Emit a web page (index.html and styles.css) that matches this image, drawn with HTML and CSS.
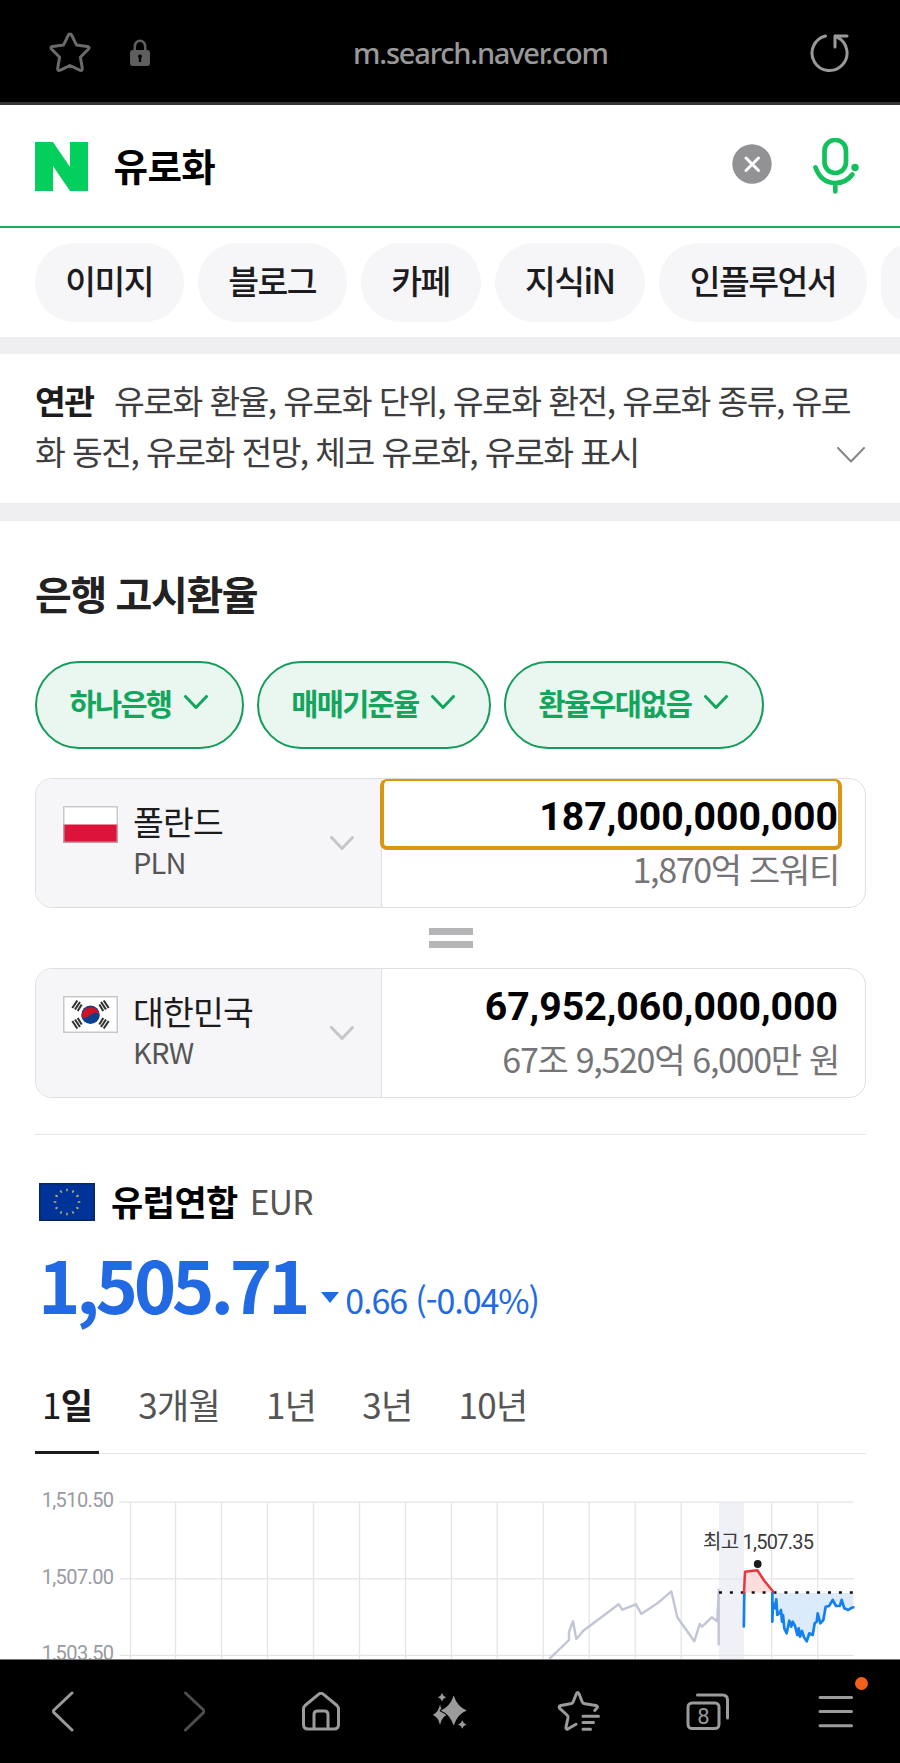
FILE: index.html
```html
<!DOCTYPE html>
<html lang="ko">
<head>
    <meta charset="UTF-8">
    <meta name="viewport" content="width=device-width, initial-scale=1.0">
    <title>유로화</title>
    <link rel="stylesheet" href="styles.css">
</head>
<body>

    <header class="address-bar">
        <svg class="icon-star" width="44" height="44" viewBox="0 0 44 44">
            <path d="M22 3q1.200 0 1.800 1.300l4.600 9.600 10.900 1.600q3 .6 1 2.800l-7.900 8 1.900 11q.2 3-2.600 1.800L22 34.500l-9.700 4.600q-2.800 1.200-2.600-1.800l1.900-11-7.900-8q-2-2.200 1-2.800l10.900-1.600 4.600-9.600q.6-1.300 1.800-1.300z"/>
        </svg>
        <svg class="icon-lock" width="20" height="28" viewBox="0 0 20 28">
            <path class="shackle" d="M4.800 12V7.500a5.200 5.800 0 0 1 10.400 0V12"/>
            <path class="lock-body" fill-rule="evenodd" d="M3 11h14q3 0 3 3v10q0 3-3 3H3q-3 0-3-3V14q0-3 3-3zM10 15.500a2 2 0 0 0-1.200 3.600V23h2.400v-3.900A2 2 0 0 0 10 15.500z"/>
        </svg>
        <span class="url">m.search.naver.com</span>
        <svg class="icon-reload" width="42" height="42" viewBox="0 0 42 42">
            <path d="M17.500 4A17.500 17.500 0 1 0 29 5.200L27 4M39 4H27v11"/>
        </svg>
    </header>

    <div class="search-bar">
        <svg class="logo" width="53" height="49" viewBox="0 0 53 49">
            <polygon points="0,0 18,0 35,25 35,0 53,0 53,49 35,49 18,24 18,49 0,49"/>
        </svg>
        <span class="query">유로화</span>
        <svg class="icon-clear" width="40" height="40" viewBox="0 0 40 40">
            <circle cx="20" cy="20" r="19.700"/>
            <path d="M14 14l12.500 12.500M26.500 14L14 26.500"/>
        </svg>
        <svg class="icon-mic" width="46" height="56" viewBox="0 0 46 56">
            <rect x="11.500" y="2" width="21.500" height="33" rx="10.700"/>
            <path d="M2.500 29.500C6 39 13 45 22.300 45c7 0 13-3 17-8.500M22.300 45v8.500"/>
            <circle cx="42" cy="29.500" r="3.700"/>
        </svg>
    </div>

    <nav class="category">
        <a>이미지</a>
        <a>블로그</a>
        <a>카페</a>
        <a>지식iN</a>
        <a>인플루언서</a>
        <a></a>
    </nav>

    <section class="related">
        <p><b>연관</b>유로화 환율, 유로화 단위, 유로화 환전, 유로화 종류, 유로<br>화 동전, 유로화 전망, 체코 유로화, 유로화 표시</p>
        <svg class="related-more" width="28" height="16" viewBox="0 0 28 16"><path d="M1 1l13 13.500L27 1"/></svg>
    </section>

    <main class="rate">
        <h2>은행 고시환율</h2>

        <div class="filters">
            <button>하나은행<svg width="24" height="15" viewBox="0 0 24 15"><path d="M1.500 1.500L12 12.500l10.500-11"/></svg></button>
            <button>매매기준율<svg width="24" height="15" viewBox="0 0 24 15"><path d="M1.500 1.500L12 12.500l10.500-11"/></svg></button>
            <button>환율우대없음<svg width="24" height="15" viewBox="0 0 24 15"><path d="M1.500 1.500L12 12.500l10.500-11"/></svg></button>
        </div>

        <div class="currency">
            <div class="nation">
                <svg class="flag" width="55" height="37" viewBox="0 0 55 37">
                    <rect width="55" height="37" fill="#fff"/>
                    <rect y="18.500" width="55" height="18.500" fill="#dc143c"/>
                    <rect class="flag-line" x=".75" y=".75" width="53.500" height="35.500"/>
                </svg>
                <div class="nation-name">
                    <span class="name">폴란드</span>
                    <span class="code">PLN</span>
                </div>
                <svg class="arrow" width="24" height="15" viewBox="0 0 24 15"><path d="M1.500 1.500L12 12.500l10.500-11"/></svg>
            </div>
            <div class="amount">
                <div class="number focus">187,000,000,000</div>
                <div class="reading">1,870억 즈워티</div>
            </div>
        </div>

        <div class="equal"></div>

        <div class="currency">
            <div class="nation">
                <svg class="flag" width="55" height="37" viewBox="0 0 55 37">
                    <rect width="55" height="37" fill="#fff"/>
                    <circle cx="27.500" cy="18.800" r="9.200" fill="#0c3f8c"/>
                    <path class="taegeuk" d="M18.500 20.500a9.200 9.200 0 0 1 18.200-2c-2-2.400-6-2.600-9.200.3s-7 4.200-9 1.700z"/>
                    <g class="trigram">
                        <path d="M9.300 12l5-7.500M12 13.500l5-7.500M14.700 15l4-6.500"/>
                        <path d="M45.700 12l-5-7.500M43 13.500L38 6M40.300 15l-4-6.500"/>
                        <path d="M9.300 25l5 7.500M12 23.500l5 7.500M14.700 22l4 6.500"/>
                        <path d="M45.700 25l-5 7.500M43 23.500L38 31M40.300 22l-4 6.500"/>
                    </g>
                    <rect class="flag-line" x=".75" y=".75" width="53.500" height="35.500"/>
                </svg>
                <div class="nation-name">
                    <span class="name">대한민국</span>
                    <span class="code">KRW</span>
                </div>
                <svg class="arrow" width="24" height="15" viewBox="0 0 24 15"><path d="M1.500 1.500L12 12.500l10.500-11"/></svg>
            </div>
            <div class="amount">
                <div class="number">67,952,060,000,000</div>
                <div class="reading">67조 9,520억 6,000만 원</div>
            </div>
        </div>

        <div class="summary">
            <div class="summary-title">
                <svg class="flag" width="56" height="38" viewBox="0 0 56 38">
                    <rect width="56" height="38" fill="#003399"/>
                    <rect x=".75" y=".75" width="54.500" height="36.500" fill="none" stroke="#0a2560" stroke-width="1.500"/>
                    <circle class="eu-stars" cx="28" cy="19" r="12" pathLength="120"/>
                </svg>
                <strong>유럽연합</strong>
                <span>EUR</span>
            </div>
            <div class="summary-price">
                <strong>1,505.71</strong>
                <svg class="down" width="18" height="22" viewBox="0 0 18 22"><path d="M0 0h18L9 11z"/></svg>
                <span>0.66 (-0.04%)</span>
            </div>
        </div>

        <div class="tabs">
            <a class="on">1<b>일</b></a>
            <a>3개월</a>
            <a>1년</a>
            <a>3년</a>
            <a>10년</a>
        </div>
    </main>

    <svg class="chart" width="900" height="182" viewBox="0 1477 900 182">
        <rect class="band" x="719" y="1502" width="25" height="157"/>
        <path class="grid" d="M120 1502.200H853.500M120 1578.800H853.500M120 1655.300H853.500M130.500 1502V1659M175.500 1502V1659M221.500 1502V1659M267.500 1502V1659M313.500 1502V1659M359.500 1502V1659M405.500 1502V1659M451.500 1502V1659M497.200 1502V1659M543.200 1502V1659M589.200 1502V1659M635.200 1502V1659M681.200 1502V1659M771.700 1502V1659M817.700 1502V1659"/>
        <g class="axis">
            <text x="113.500" y="1507">1,510.50</text>
            <text x="113.500" y="1583.500">1,507.00</text>
            <text x="113.500" y="1660">1,503.50</text>
        </g>
        <path class="area-up" d="M744 1592.700L745 1571.700 757.300 1570.300 764.300 1580.700 773.300 1592.700z"/>
        <path class="area-down" d="M772.300 1593L773 1603.300 775 1608.300 777.300 1615 781 1610 784.300 1628.300 786.700 1633.300 789.300 1620.700 795 1626 797.300 1635 802 1631 806.700 1641.300 812.700 1635 814.700 1623.300 817.700 1613.300 820.300 1623.300 823.300 1620 825.700 1606.700 832.700 1600 836 1606 841.700 1600 844.300 1608.300 853.300 1607.300V1593z"/>
        <polyline class="line-prev" points="550,1658.300 569,1640 569,1631.700 573,1621.300 576.300,1639 583.300,1630.700 618.700,1604.300 622.300,1609.700 636,1604.300 641.300,1614 657.300,1603.300 671.300,1591.300 677.300,1617.300 694.300,1641.300 699.700,1624 702,1626.700 711.700,1617.300 717.300,1621.300 718.700,1590 718.700,1644.300"/>
        <path class="base" d="M719 1592.500H853.500"/>
        <path class="line-down" d="M744.300 1593L743.800 1626.500M772.300 1593V1621.700L773 1603.300 775 1608.300 776.300 1599.300 777.300 1615 779.300 1613.300 781 1610 782 1621.700 783 1615 784.300 1628.300 786.700 1633.300 789.300 1620.700 791.300 1626.700 792.700 1621.700 795 1626 797.300 1635 798.700 1628.300 800 1636.700 802 1631 804 1637.300 806.700 1641.300 809.300 1633.300 812.700 1635 814.700 1623.300 816.700 1621.700 817.700 1613.300 820.300 1623.300 823.300 1620 825.700 1606.700 829 1606 832.700 1600 836 1606 839.700 1606 841.700 1600 844.300 1608.300 848.300 1610 850.700 1608.300 853.300 1607.300"/>
        <polyline class="line-up" points="744,1592.700 745,1571.700 757.300,1570.300 764.300,1580.700 773.300,1591.700"/>
        <circle cx="757.700" cy="1564" r="3.900" fill="#1c1c1e"/>
        <text class="high" x="703" y="1548.500">최고 1,507.35</text>
    </svg>

    <footer class="toolbar">
        <a class="back"><svg width="24" height="44" viewBox="0 0 24 44"><path d="M20 3L2 20q-1.300 1.300 0 2.600L20 40"/></svg></a>
        <a class="forward"><svg width="24" height="44" viewBox="0 0 24 44"><path d="M4.500 3l18 17q1.300 1.300 0 2.600L4.500 40"/></svg></a>
        <a><svg width="40" height="40" viewBox="0 0 40 40"><path d="M2.500 17q0-2 1.500-3.500L17.500 2.300q2.500-2 5 0L36 13.500q1.500 1.500 1.500 3.500V32.500q0 4.500-4.500 4.500H7q-4.500 0-4.500-4.500zM13 36.500V22.500q0-3.500 3.500-3.500h7q3.500 0 3.500 3.500v14"/></svg></a>
        <a class="sparkle"><svg width="34" height="38" viewBox="0 0 34 38">
            <path d="M7 11.500q1.800 8.500 7.500 10.300Q8.800 23.600 7 32.100 5.200 23.600-.5 21.800 5.200 20 7 11.500z"/>
            <path class="main-star" d="M20.700 2.500q3.600 11.200 13 15-9.400 3.800-13 15-3.600-11.200-13-15 9.400-3.800 13-15z"/>
            <path d="M9 0q.9 3.300 4.200 4.200Q9.900 5.100 9 8.400 8.100 5.100 4.800 4.200 8.100 3.300 9 0zM29.300 27.300q.9 3.300 4.200 4.200-3.300.9-4.200 4.200-.9-3.300-4.200-4.200 3.300-.9 4.200-4.200z"/>
        </svg></a>
        <a><svg width="44" height="42" viewBox="0 0 44 42"><path d="M37.700 19.500l2.100-2.200q1.600-2-1-2.800L28 12.800q-2-.3-2.800-2l-3.200-8q-1.300-2.600-2.600 0l-3.200 8q-.8 1.700-2.800 2L4 14.500q-3.200.8-1 3.200l7 6.300q1.200 1.200 1 2.800L9 36q-.3 3 2.200 1.800l7.800-4.500M26 25.200h15.500M26 31.500h10.500M26 38.200h7.500"/></svg></a>
        <a><svg width="44" height="38" viewBox="0 0 44 38"><rect x="3" y="10" width="31" height="25.500" rx="4"/><path d="M12.500 2h25q5 0 5 5v18"/><text x="18.500" y="30.500">8</text></svg></a>
        <a class="menu"><svg width="36" height="32" viewBox="0 0 36 32"><path d="M2 1.500h31.500M2 15.500h31.500M2 29.700h31.500"/></svg><i></i></a>
    </footer>

</body>
</html>
```
FILE: styles.css
```css
* { box-sizing: border-box; }
body {
    margin: 0;
    height: 1763px;
    overflow: hidden;
    background: #fff;
    color: #1c1c1e;
    font-family: "Noto Sans CJK KR", sans-serif;
    font-size: 33.5px;
    letter-spacing: -1.6px;
}
svg { display: block; flex: none; }
svg path, svg polyline { fill: none; stroke-linecap: round; stroke-linejoin: round; }

/* browser address bar */
.address-bar {
    display: flex;
    align-items: center;
    height: 105px;
    padding: 3px 50px 0 48px;
    background: #000;
    border-bottom: 3px solid #333;
}
.icon-star path { stroke: #6b6b6b; stroke-width: 3; }
.icon-lock { margin-left: 38px; }
.icon-lock .shackle { stroke: #5f5f5f; stroke-width: 2.5; }
.icon-lock .lock-body { fill: #5f5f5f; }
.url { margin-left: 203px; width: 260px; font: 500 29px "Noto Sans", sans-serif; letter-spacing: -1.2px; color: #999; white-space: nowrap; }
.icon-reload { margin-left: auto; }
.icon-reload path { stroke: #999; stroke-width: 3; }

/* search input */
.search-bar {
    display: flex;
    align-items: center;
    height: 123px;
    padding: 0 41px 0 35px;
    border-bottom: 2px solid #1faa5c;
}
.logo { margin-top: 2px; }
.logo polygon { fill: #03cf5d; }
.query { margin: -3px 0 0 25.5px; font-size: 37.5px; font-weight: 700; letter-spacing: -0.6px; color: #000; }
.icon-clear { margin: 0 0 4px auto; }
.icon-clear circle { fill: #929294; }
.icon-clear path { stroke: #fff; stroke-width: 3; }
.icon-mic { margin-left: 41px; }
.icon-mic rect, .icon-mic path { fill: none; stroke: #12c05c; stroke-width: 4.7; }
.icon-mic circle { fill: #12c05c; }

/* category pills */
.category {
    display: flex;
    gap: 14px;
    height: 126px;
    padding: 15px 0 0 35px;
    border-bottom: 17px solid #efeff1;
    overflow: hidden;
}
.category a { flex: none; height: 79px; padding: 0 31px 0 30.3px; border-radius: 40px; background: #f6f6f9; line-height: 74px; font-weight: 500; }

/* related queries */
.related { position: relative; height: 167px; padding: 20px 0 0 35px; border-bottom: 18px solid #efeff1; }
.related p { margin: 0; line-height: 51px; color: #3e3e40; white-space: nowrap; }
.related b { margin-right: 20.5px; color: #1c1c1e; }
.related-more { position: absolute; right: 35px; top: 93px; }
.related-more path { stroke: #858587; stroke-width: 2; }

/* exchange rate */
.rate { padding: 0 34px 23px 35px; }
.rate h2 { margin: 0; padding-top: 44px; height: 140px; font-size: 40px; line-height: 56px; letter-spacing: -1.4px; color: #222; }
.filters { display: flex; gap: 13px; }
.filters button {
    display: flex;
    align-items: center;
    height: 88px;
    padding: 0 33.500px 6px 32.500px;
    border: 2px solid #149c5a;
    border-radius: 44px;
    background: #e9f7f0;
    color: #12a65c;
    font: 700 29.5px "Noto Sans CJK KR", sans-serif;
    letter-spacing: -1.7px;
}
.filters svg { margin: 0 0 0 13px; }
.filters path { stroke: #12a65c; stroke-width: 3; }

.currency { display: flex; height: 130px; border: 1px solid #dfdfe2; border-radius: 17px; overflow: hidden; }
.filters + .currency { margin-top: 29px; }
.nation { display: flex; width: 346px; padding: 27px 27px 0 27px; background: #f6f6f9; border-right: 1px solid #dfdfe2; }
.flag-line { fill: none; stroke: #bbb; stroke-opacity: .8; stroke-width: 1.5; }
.nation .taegeuk { fill: #cf1126; }
.trigram path { stroke: #333; stroke-width: 2.1; stroke-linecap: butt; }
.nation-name { display: flex; flex-direction: column; margin: -5px 0 0 15px; line-height: 40px; letter-spacing: -0.8px; }
.code { font-size: 29px; color: #555; letter-spacing: -0.8px; }
.arrow { margin: 30px 0 0 auto; }
.arrow path { stroke: #c6c6c8; stroke-width: 3; }
.amount { flex: 1; text-align: right; }
.number { height: 71px; margin-right: 23px; padding-right: 4px; font: 700 39.2px/76px Roboto, sans-serif; letter-spacing: 0; color: #000; }
.focus { border: 4px solid #d99610; border-top-width: 2px; border-radius: 7px; padding-right: 0; line-height: 73px; margin-left: -2px; }
.reading { margin: -4px 26px 0 0; font-size: 34px; line-height: 46px; letter-spacing: -1.3px; color: #757577; }
.equal { width: 44px; height: 20px; margin: 20px auto; border: solid #b5b5b7; border-width: 7px 0; }

/* current price */
.summary { margin-top: 36px; border-top: 1px solid #e6e6e8; }
.summary-title { display: flex; align-items: center; height: 40px; margin: 47px 0 0 4px; }
.summary-title strong { margin: -3px 12px 0 16px; font-size: 35px; letter-spacing: -0.5px; color: #000; }
.summary-title span { margin-top: -3px; font-size: 33.5px; color: #555; letter-spacing: -0.7px; }
.eu-stars { fill: none; stroke: #b9b75c; stroke-width: 2.6; stroke-dasharray: 2.6 7.4; stroke-dashoffset: 1.3; }
.summary-price { display: flex; align-items: baseline; height: 105px; margin: 8px 0 0 3px; color: #2269e4; }
.summary-price strong { font-size: 72px; line-height: 105px; letter-spacing: -4.200px; }
.down { margin: 0 6px 0 15px; }
.down path { fill: #2269e4; }
.summary-price span { font-size: 34px; letter-spacing: -1.1px; }
.tabs { display: flex; gap: 32px; height: 92px; margin-top: 27px; border-bottom: 1px solid #e6e6e8; color: #555; font-size: 35px; letter-spacing: -0.7px; }
.tabs a { height: 92px; padding: 0 7px; line-height: 83px; }
.tabs .on { color: #1c1c1e; border-bottom: 3px solid #1c1c1e; }

/* day chart */
.band { fill: #f0f1f7; }
.grid { stroke: #e3e5e9; stroke-width: 1.3; }
.axis text { fill: #979ba1; font: 20px Roboto, sans-serif; letter-spacing: -0.6px; text-anchor: end; }
.chart .area-up { fill: #fddedd; }
.chart .area-down { fill: #dcebfc; }
.line-prev { stroke: #c1c5d6; stroke-width: 2.4; }
.chart .base { stroke: #111; stroke-width: 2.5; stroke-dasharray: 3 7.9; stroke-linecap: butt; }
.line-up { stroke: #e6373a; stroke-width: 2.5; }
.line-down { stroke: #1480ee; stroke-width: 2.7; }
.high { fill: #3a3a3c; font: 20px Roboto, "Noto Sans CJK KR", sans-serif; letter-spacing: -0.75px; }

/* browser toolbar */
.toolbar { display: flex; height: 104px; background: #000; border-top: 1px solid #777; }
.toolbar a { position: relative; flex: 1; display: flex; justify-content: center; align-items: center; }
.toolbar path, .toolbar rect { fill: none; stroke: #9b9b9b; stroke-width: 3; }
.toolbar .forward path { stroke: #4c4c4c; }
.toolbar .sparkle path { fill: #9b9b9b; stroke: none; }
.toolbar .sparkle .main-star { stroke: #000; stroke-width: 2; paint-order: stroke; }
.toolbar text { fill: #9b9b9b; font: 22px Roboto, sans-serif; letter-spacing: 0; text-anchor: middle; }
.menu i { position: absolute; left: 84px; top: 17px; width: 13px; height: 13px; border-radius: 50%; background: #f2601a; }
```
